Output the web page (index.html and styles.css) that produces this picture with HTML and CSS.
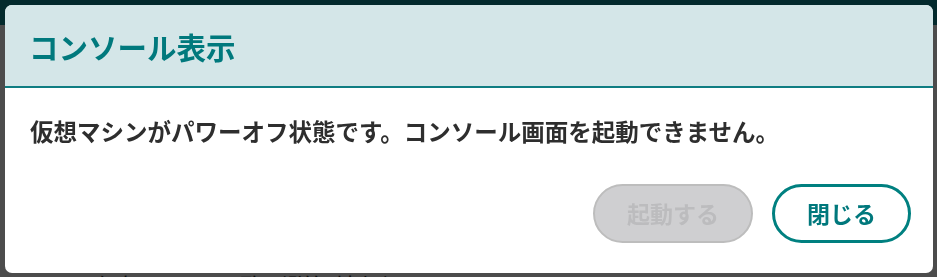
FILE: index.html
```html
<!DOCTYPE html>
<html lang="ja">
<head>
<meta charset="utf-8">
<title>コンソール表示</title>
<link rel="stylesheet" href="styles.css">
</head>
<body>
<div class="page">
  <header class="topbar"></header>
  <main class="content">
    <p class="content-text">仮想マシン一覧（詳細情報）</p>
  </main>
</div>
<div class="overlay"></div>
<div class="modal" role="dialog" aria-labelledby="modal-title">
  <div class="modal-header">
    <h2 class="modal-title" id="modal-title">コンソール表示</h2>
  </div>
  <div class="modal-body">
    <p class="modal-message">仮想マシンがパワーオフ状態です。コンソール画面を起動できません。</p>
    <div class="modal-actions">
      <button class="btn btn-disabled" disabled>起動する</button>
      <button class="btn btn-outline">閉じる</button>
    </div>
  </div>
</div>
</body>
</html>
```

FILE: styles.css
```css
* { box-sizing: border-box; }
html, body { margin: 0; padding: 0; }
body {
  width: 937px;
  height: 277px;
  overflow: hidden;
  background: #ffffff;
  font-family: "Noto Sans CJK JP", "Noto Sans", sans-serif;
}
.page { width: 100%; height: 100%; overflow: hidden; }
.topbar {
  height: 25px;
  background: #0b8c96;
}
.content {
  padding: 249px 0 0 95px;
}
.content-text {
  margin: 0;
  font-size: 24px;
  line-height: 24px;
  color: #333333;
}
.overlay {
  position: fixed;
  inset: 0;
  background: rgba(0, 0, 0, 0.7);
}
.modal {
  position: fixed;
  left: 5px;
  top: 5px;
  width: 928px;
  height: 268px;
  background: #ffffff;
  border-radius: 7px;
  overflow: hidden;
  display: flex;
  flex-direction: column;
}
.modal-header {
  height: 83px;
  flex: none;
  background: #d4e6e8;
  border-bottom: 2px solid #0f7d82;
  display: flex;
  align-items: center;
  padding-left: 24px;
}
.modal-title {
  margin: 0;
  font-size: 29.5px;
  font-weight: 700;
  line-height: 36px;
  color: #00797d;
}
.modal-body {
  flex: 1;
  display: flex;
  flex-direction: column;
  padding: 26px 22px 30px 25px;
}
.modal-message {
  margin: 0;
  font-size: 23.5px;
  font-weight: 700;
  line-height: 34px;
  color: #2e2e2e;
}
.modal-actions {
  margin-top: auto;
  display: flex;
  justify-content: flex-end;
  gap: 19px;
}
.btn {
  height: 59px;
  padding: 0 32px;
  border-radius: 30px;
  font-family: inherit;
  font-size: 23px;
  font-weight: 700;
  line-height: 1;
  background: #ffffff;
}
.btn-disabled {
  background: #cfcfd1;
  border: 2px solid #bdbdbd;
  color: #bcbcbe;
}
.btn-outline {
  border: 3px solid #008080;
  color: #00787c;
}
```
